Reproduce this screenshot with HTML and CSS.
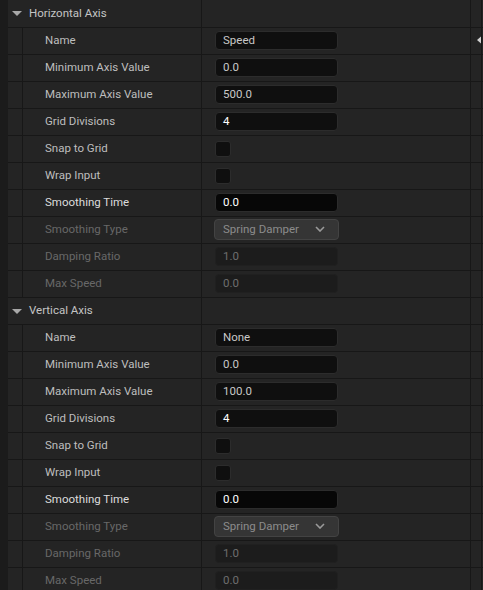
FILE: index.html
```html
<!DOCTYPE html>
<html>
<head>
<meta charset="utf-8">
<link rel="stylesheet" href="styles.css">
</head>
<body>
<div class="panel">
  <div class="gutter"></div>
  <div class="list">
    <div class="row header first">
      <div class="name"><span class="tri"></span><span class="htext">Horizontal Axis</span></div>
      <div class="value"></div>
      <div class="extra"></div>
    </div>
    <div class="row">
      <div class="name"><span class="indent"></span><span class="label">Name</span></div>
      <div class="value"><div class="box">Speed</div></div>
      <div class="extra"><svg class="reset" width="10" height="8" viewBox="0 0 10 8"><path d="M0 4 L4 0.5 L4 2.6 L10 2.6 L10 5.4 L4 5.4 L4 7.5 Z" fill="#d0d0d0"/></svg></div>
    </div>
    <div class="row">
      <div class="name"><span class="indent"></span><span class="label">Minimum Axis Value</span></div>
      <div class="value"><div class="box">0.0</div></div>
      <div class="extra"></div>
    </div>
    <div class="row">
      <div class="name"><span class="indent"></span><span class="label">Maximum Axis Value</span></div>
      <div class="value"><div class="box">500.0</div></div>
      <div class="extra"></div>
    </div>
    <div class="row">
      <div class="name"><span class="indent"></span><span class="label">Grid Divisions</span></div>
      <div class="value"><div class="box bright">4</div></div>
      <div class="extra"></div>
    </div>
    <div class="row">
      <div class="name"><span class="indent"></span><span class="label">Snap to Grid</span></div>
      <div class="value"><div class="check"></div></div>
      <div class="extra"></div>
    </div>
    <div class="row">
      <div class="name"><span class="indent"></span><span class="label">Wrap Input</span></div>
      <div class="value"><div class="check"></div></div>
      <div class="extra"></div>
    </div>
    <div class="row">
      <div class="name"><span class="indent"></span><span class="label hl">Smoothing Time</span></div>
      <div class="value"><div class="box bright deep">0.0</div></div>
      <div class="extra"></div>
    </div>
    <div class="row">
      <div class="name"><span class="indent"></span><span class="label dim">Smoothing Type</span></div>
      <div class="value"><div class="combo"><span>Spring Damper</span><svg class="chev" width="10" height="6" viewBox="0 0 10 6"><path d="M1 1 L5 5 L9 1" fill="none" stroke="#9a9a9a" stroke-width="1.6"/></svg></div></div>
      <div class="extra"></div>
    </div>
    <div class="row">
      <div class="name"><span class="indent"></span><span class="label dim">Damping Ratio</span></div>
      <div class="value"><div class="box off">1.0</div></div>
      <div class="extra"></div>
    </div>
    <div class="row">
      <div class="name"><span class="indent"></span><span class="label dim">Max Speed</span></div>
      <div class="value"><div class="box off">0.0</div></div>
      <div class="extra"></div>
    </div>

    <div class="row header">
      <div class="name"><span class="tri"></span><span class="htext">Vertical Axis</span></div>
      <div class="value"></div>
      <div class="extra"></div>
    </div>
    <div class="row">
      <div class="name"><span class="indent"></span><span class="label">Name</span></div>
      <div class="value"><div class="box">None</div></div>
      <div class="extra"></div>
    </div>
    <div class="row">
      <div class="name"><span class="indent"></span><span class="label">Minimum Axis Value</span></div>
      <div class="value"><div class="box">0.0</div></div>
      <div class="extra"></div>
    </div>
    <div class="row">
      <div class="name"><span class="indent"></span><span class="label">Maximum Axis Value</span></div>
      <div class="value"><div class="box">100.0</div></div>
      <div class="extra"></div>
    </div>
    <div class="row">
      <div class="name"><span class="indent"></span><span class="label">Grid Divisions</span></div>
      <div class="value"><div class="box bright">4</div></div>
      <div class="extra"></div>
    </div>
    <div class="row">
      <div class="name"><span class="indent"></span><span class="label">Snap to Grid</span></div>
      <div class="value"><div class="check"></div></div>
      <div class="extra"></div>
    </div>
    <div class="row">
      <div class="name"><span class="indent"></span><span class="label">Wrap Input</span></div>
      <div class="value"><div class="check"></div></div>
      <div class="extra"></div>
    </div>
    <div class="row">
      <div class="name"><span class="indent"></span><span class="label hl">Smoothing Time</span></div>
      <div class="value"><div class="box bright deep">0.0</div></div>
      <div class="extra"></div>
    </div>
    <div class="row">
      <div class="name"><span class="indent"></span><span class="label dim">Smoothing Type</span></div>
      <div class="value"><div class="combo"><span>Spring Damper</span><svg class="chev" width="10" height="6" viewBox="0 0 10 6"><path d="M1 1 L5 5 L9 1" fill="none" stroke="#9a9a9a" stroke-width="1.6"/></svg></div></div>
      <div class="extra"></div>
    </div>
    <div class="row">
      <div class="name"><span class="indent"></span><span class="label dim">Damping Ratio</span></div>
      <div class="value"><div class="box off">1.0</div></div>
      <div class="extra"></div>
    </div>
    <div class="row">
      <div class="name"><span class="indent"></span><span class="label dim">Max Speed</span></div>
      <div class="value"><div class="box off">0.0</div></div>
      <div class="extra"></div>
    </div>
  </div>
</div>
</body>
</html>
```

FILE: styles.css
```css
html, body {
  margin: 0;
  padding: 0;
  background: #1b1b1b;
  overflow: hidden;
}
body {
  width: 483px;
  height: 590px;
  font-family: Roboto, "Liberation Sans", sans-serif;
  font-size: 11.5px;
  color: #c0c0c0;
}
.panel {
  display: flex;
  height: 590px;
}
.gutter {
  width: 8px;
  flex: none;
  background: #1b1b1b;
}
.list {
  width: 475px;
  display: flex;
  flex-direction: column;
  background: #242424;
}
.row {
  display: flex;
  height: 26px;
  flex: none;
  border-top: 1px solid #171717;
}
.row.first {
  border-top: none;
  height: 27px;
}
.name {
  width: 193px;
  flex: none;
  display: flex;
  align-items: center;
  border-right: 1px solid #171717;
}
.value {
  width: 269px;
  flex: none;
  display: flex;
  align-items: center;
  padding-left: 13px;
  box-sizing: border-box;
  border-right: 1px solid #171717;
}
.extra {
  width: 10px;
  flex: none;
  border-right: 1px solid #171717;
  display: flex;
  align-items: center;
  overflow: hidden;
}
.reset {
  margin-left: 6px;
  margin-bottom: 2px;
  flex: none;
}
.tri {
  width: 0;
  height: 0;
  margin-left: 4px;
  border-left: 5px solid transparent;
  border-right: 5px solid transparent;
  border-top: 5px solid #a8a8a8;
}
.htext {
  margin-left: 7px;
  margin-bottom: 2px;
  color: #c4c4c4;
}
.indent {
  width: 14px;
  height: 100%;
  flex: none;
  border-right: 1px solid #171717;
}
.label {
  padding-left: 22px;
  margin-bottom: 2px;
  color: #bebebe;
}
.label.hl {
  color: #dcdcdc;
}
.label.dim {
  color: #686868;
}
.box {
  width: 123px;
  height: 19px;
  margin-bottom: 1px;
  box-sizing: border-box;
  background: #0f0f0f;
  border: 1px solid #2c2c2c;
  border-radius: 4px;
  padding-left: 7px;
  padding-bottom: 2px;
  display: flex;
  align-items: center;
  color: #c8c8c8;
}
.box.bright {
  color: #ffffff;
}
.box.deep {
  background: #070707;
}
.box.off {
  background: #1c1c1c;
  border-color: #202020;
  color: #6e6e6e;
}
.check {
  width: 16px;
  height: 16px;
  margin-bottom: 1px;
  box-sizing: border-box;
  background: #0f0f0f;
  border: 1px solid #2c2c2c;
  border-radius: 3px;
}
.combo {
  width: 125px;
  height: 21px;
  margin-left: -1px;
  margin-bottom: 1px;
  box-sizing: border-box;
  background: #353535;
  border: 1px solid #434343;
  border-radius: 4px;
  padding-left: 8px;
  padding-right: 13px;
  padding-bottom: 2px;
  display: flex;
  align-items: center;
  justify-content: space-between;
  color: #8c8c8c;
}
.chev {
  flex: none;
}
```
